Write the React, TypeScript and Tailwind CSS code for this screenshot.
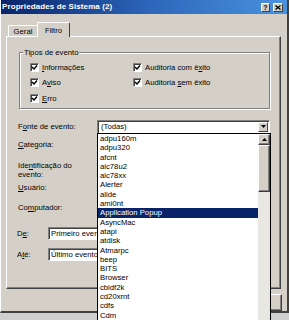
import React from "react";

const sources = [
  "adpu160m",
  "adpu320",
  "afcnt",
  "aic78u2",
  "aic78xx",
  "Alerter",
  "alide",
  "ami0nt",
  "Application Popup",
  "AsyncMac",
  "atapi",
  "atdisk",
  "Atmarpc",
  "beep",
  "BITS",
  "Browser",
  "cbidf2k",
  "cd20xrnt",
  "cdfs",
  "Cdm",
];

function Check({ label }: { label: React.ReactNode }) {
  return (
    <div className="flex items-center h-[9px]">
      <div className="w-[9px] h-[9px] bg-white border-t border-l border-[#808080] border-r border-b border-r-white border-b-white shadow-[inset_1px_1px_#404040] flex items-center justify-center">
        <svg width="7" height="7" viewBox="0 0 7 7">
          <path d="M1 3 L3 5 L6 1.5" stroke="#000" strokeWidth="1.4" fill="none" />
        </svg>
      </div>
      <span className="ml-[3px]">{label}</span>
    </div>
  );
}

function Combo({ text, className }: { text: string; className: string }) {
  return (
    <div
      className={
        "bg-white border border-t-[#808080] border-l-[#808080] border-b-white border-r-0 shadow-[inset_1px_1px_#404040] flex items-center pl-[2px] whitespace-nowrap overflow-hidden " +
        className
      }
    >
      {text}
    </div>
  );
}

function Label({ children, className = "" }: { children: React.ReactNode; className?: string }) {
  return <div className={"flex items-center " + className}>{children}</div>;
}

export default function App() {
  return (
    <div className="relative w-[289px] h-[320px] overflow-hidden bg-[#cfcfcf] text-[7.7px] leading-[9px] text-black font-['Liberation_Sans',Arial,sans-serif]">
      {/* window */}
      <div className="h-[313px] bg-[#d4d0c8] border-l border-white border-r-2 border-r-[#404040] border-b-2 border-b-[#404040] flex flex-col">
        {/* title bar */}
        <div className="h-[14px] flex items-center pl-[1px] pr-[4px] bg-linear-to-r from-[#0a246a] via-[#2c64b8] to-[#4a92e0]">
          <span className="text-white font-bold text-[8px] tracking-[0.1px]">Propriedades de Sistema (2)</span>
          <div className="ml-auto flex items-center gap-[3px] mt-[2px]">
            <div className="w-[9px] h-[9px] bg-[#d4d0c8] border border-t-white border-l-white border-r-[#404040] border-b-[#404040] flex items-center justify-center text-[7px] font-bold leading-none">
              ?
            </div>
            <div className="w-[10px] h-[9px] bg-[#d4d0c8] border border-t-white border-l-white border-r-[#404040] border-b-[#404040] flex items-center justify-center">
              <svg width="6" height="5" viewBox="0 0 6 5">
                <path d="M0.5 0.5 L5.5 4.5 M5.5 0.5 L0.5 4.5" stroke="#000" strokeWidth="1.3" />
              </svg>
            </div>
          </div>
        </div>

        {/* tabs */}
        <div className="mt-[7px] ml-[5px] flex items-end h-[15px] relative z-10">
          <div className="ml-[2px] w-[30px] h-[12px] mb-[-1px] border-t border-l border-white border-r border-r-[#404040] rounded-t-[2px] flex items-center justify-center pt-[1px]">
            Geral
          </div>
          <div className="w-[33px] h-[15px] mb-[-1px] bg-[#d4d0c8] border-t border-l border-white border-r border-r-[#404040] rounded-t-[2px] flex items-start justify-center pt-[3px] -ml-[1px]">
            Filtro
          </div>
        </div>

        {/* panel */}
        <div className="ml-[5px] w-[275px] h-[255px] border-t border-l border-white border-r border-b border-r-[#404040] border-b-[#404040] shadow-[inset_-1px_-1px_#808080] flex flex-col">
          {/* group box */}
          <div className="relative mt-[15px] ml-[12px] w-[251px] h-[57px] border border-[#808080] shadow-[1px_1px_#fff,inset_1px_1px_#fff]">
            <span className="absolute -top-[5px] left-[3px] bg-[#d4d0c8] px-[1px]">Tipos de evento</span>
            <div className="grid grid-cols-[103px_1fr] gap-y-[6.5px] pt-[10px] pl-[10px]">
              <Check label={<><u>I</u>nformações</>} />
              <Check label={<>Auditoria com ê<u>x</u>ito</>} />
              <Check label={<>A<u>v</u>iso</>} />
              <Check label={<>Auditoria <u>s</u>em êxito</>} />
              <Check label={<><u>E</u>rro</>} />
            </div>
          </div>

          {/* fields */}
          <div className="ml-[11px] flex flex-col">
            <div className="mt-[11px] flex items-center h-[14px]">
              <Label className="w-[79px]">F<u>o</u>nte de evento:</Label>
              <div className="relative w-[173px] h-[14px] bg-white border border-t-[#808080] border-l-[#808080] border-b-white border-r-white shadow-[inset_1px_1px_#404040] flex items-center pl-[3px]">
                (Todas)
                <div className="absolute right-[1px] top-[1px] w-[10px] h-[10px] bg-[#d4d0c8] border border-t-white border-l-white border-r-[#404040] border-b-[#404040] flex items-center justify-center">
                  <svg width="5" height="3" viewBox="0 0 5 3">
                    <path d="M0 0 H5 L2.5 3 Z" fill="#000" />
                  </svg>
                </div>
              </div>
            </div>
            <Label className="mt-[4px] h-[14px]"><u>C</u>ategoria:</Label>
            <div className="mt-[9px] leading-[9px]">
              Ide<u>n</u>tificação do
              <br />
              evento:
            </div>
            <Label className="mt-[2px] h-[14px]"><u>U</u>suário:</Label>
            <Label className="mt-[6px] h-[14px]">Co<u>m</u>putador:</Label>
            <div className="mt-[12px] flex items-center h-[13px]">
              <Label className="w-[31px] -ml-[1px]">D<u>e</u>:</Label>
              <Combo text="Primeiro evento" className="w-[49px] h-[13px]" />
            </div>
            <div className="mt-[8px] flex items-center h-[13px]">
              <Label className="w-[31px] -ml-[1px]">A<u>t</u>é:</Label>
              <Combo text="Último evento" className="w-[49px] h-[13px]" />
            </div>
          </div>
        </div>

        {/* buttons */}
        <div className="mt-[5px] flex justify-end gap-[4px] pr-[5px]">
          {["OK", "Cancelar", "Aplicar"].map((b) => (
            <div
              key={b}
              className="w-[52px] h-[17px] border border-t-white border-l-white border-r-[#404040] border-b-[#404040] shadow-[inset_-1px_-1px_#808080] flex items-center justify-center text-transparent"
            >
              {b}
            </div>
          ))}
        </div>
      </div>

      {/* open dropdown list */}
      <div className="absolute left-[97px] top-[133px] w-[174px] h-[190px] bg-white border border-black border-b-0 flex">
        <div className="flex-1 flex flex-col text-[7.7px]">
          {sources.map((s) => (
            <div
              key={s}
              className={
                "h-[9.3px] leading-[9.3px] pl-[2px] whitespace-nowrap " +
                (s === "Application Popup" ? "bg-[#0a246a] text-white" : "")
              }
            >
              {s}
            </div>
          ))}
        </div>
        <div className="w-[12px] flex flex-col">
          <div className="h-[11px] bg-[#d4d0c8] border border-t-white border-l-white border-r-[#404040] border-b-[#404040] shadow-[inset_-1px_-1px_#808080] flex items-center justify-center">
            <svg width="5" height="3" viewBox="0 0 5 3">
              <path d="M0 3 H5 L2.5 0 Z" fill="#000" />
            </svg>
          </div>
          <div className="h-[47px] bg-[#d4d0c8] border border-t-white border-l-white border-r-[#404040] border-b-[#404040] shadow-[inset_-1px_-1px_#808080]" />
          <div className="flex-1 bg-[#e9e7e2]" />
        </div>
      </div>
    </div>
  );
}
